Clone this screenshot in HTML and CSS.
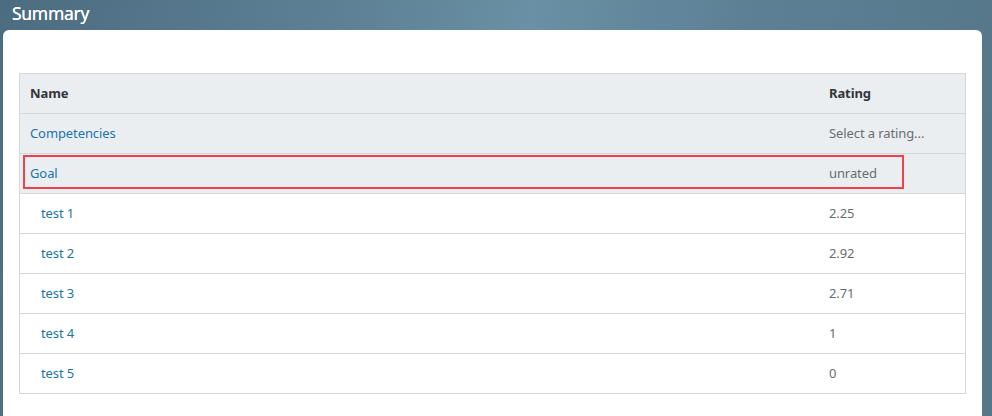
FILE: index.html
```html
<!DOCTYPE html>
<html>
<head>
<meta charset="utf-8">
<link rel="stylesheet" href="styles.css">
</head>
<body>
<div class="page">
  <div class="title">Summary</div>
  <div class="card">
    <div class="table">
      <div class="row head">
        <div class="cell name">Name</div>
        <div class="cell rating">Rating</div>
      </div>
      <div class="row group">
        <div class="cell name link">Competencies</div>
        <div class="cell rating muted">Select a rating...</div>
      </div>
      <div class="row group selected">
        <div class="cell name link">Goal</div>
        <div class="cell rating muted">unrated</div>
      </div>
      <div class="row item">
        <div class="cell name link">test 1</div>
        <div class="cell rating muted">2.25</div>
      </div>
      <div class="row item">
        <div class="cell name link">test 2</div>
        <div class="cell rating muted">2.92</div>
      </div>
      <div class="row item">
        <div class="cell name link">test 3</div>
        <div class="cell rating muted">2.71</div>
      </div>
      <div class="row item">
        <div class="cell name link">test 4</div>
        <div class="cell rating muted">1</div>
      </div>
      <div class="row item">
        <div class="cell name link">test 5</div>
        <div class="cell rating muted">0</div>
      </div>
    </div>
  </div>
</div>
</body>
</html>
```

FILE: styles.css
```css
html, body {
  margin: 0;
  padding: 0;
}
body {
  width: 992px;
  height: 416px;
  overflow: hidden;
  background: linear-gradient(100deg, #4c6c80 0%, #5f8296 35%, #6990a4 50%, #5d8095 70%, #557688 100%);
  font-family: "Noto Sans", "Liberation Sans", sans-serif;
}
.page {
  display: flex;
  flex-direction: column;
}
.title {
  height: 30px;
  padding-left: 12px;
  color: #ffffff;
  font-family: "Noto Sans", "Liberation Sans", sans-serif;
  font-size: 17.5px;
  line-height: 27px;
  letter-spacing: -0.3px;
  text-shadow: 0 0 0.4px #ffffff;
}
.card {
  margin-left: 3px;
  width: 979px;
  height: 400px;
  background: #ffffff;
  border-radius: 6px 6px 0 0;
  box-sizing: border-box;
  padding: 43px 16px 0 16px;
}
.table {
  border: 1px solid #d5d8db;
  display: flex;
  flex-direction: column;
}
.row {
  display: flex;
  height: 40px;
  border-bottom: 1px solid #d5d8db;
  box-sizing: border-box;
  align-items: center;
  padding-bottom: 2px;
  font-size: 13px;
  letter-spacing: -0.1px;
}
.row:last-child {
  border-bottom: none;
  height: 39px;
  padding-bottom: 1px;
}
.head, .group {
  background: #ebeef1;
}
.item {
  background: #ffffff;
}
.cell.name {
  flex: 1;
  padding-left: 10px;
}
.item .cell.name {
  padding-left: 21px;
}
.cell.rating {
  width: 136px;
}
.head .cell {
  font-weight: bold;
  color: #32363a;
}
.link {
  color: #1a75a8;
}
.muted {
  color: #6a6d70;
}
.selected {
  position: relative;
}
.selected::after {
  content: "";
  position: absolute;
  left: 3px;
  top: 1px;
  width: 881px;
  height: 34px;
  border: 2px solid #f0404a;
  box-sizing: border-box;
}
```
